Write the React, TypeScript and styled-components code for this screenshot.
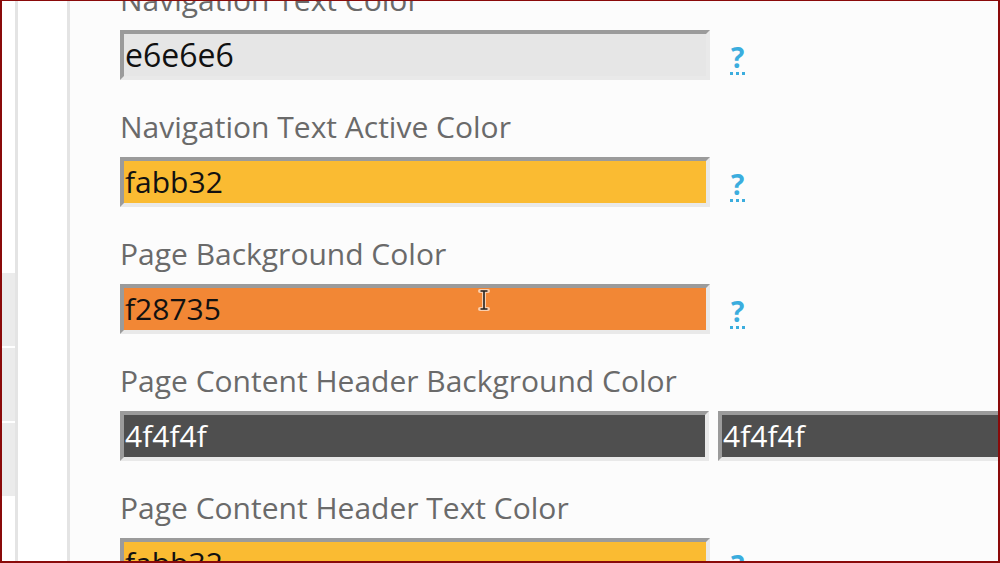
import React from "react";
import styled, { createGlobalStyle } from "styled-components";

const Global = createGlobalStyle`
  html, body { margin: 0; padding: 0; background: #fff; overflow: hidden; }
  * { box-sizing: border-box; }
`;

const Frame = styled.div`
  width: 1000px;
  height: 563px;
  border: 2px solid #8a0a0a;
  border-top-width: 1px;
  display: flex;
  overflow: hidden;
  background: #fff;
  font-family: "Open Sans", "Noto Sans", sans-serif;
`;

const Sidebar = styled.div`
  display: flex;
  flex: none;
  height: 100%;
`;

const Strip = styled.div`
  width: 13px;
  display: flex;
  flex-direction: column;
  gap: 2px;
  padding-top: 272px;
`;

const StripItem = styled.div`
  height: 73px;
  background: #ebebeb;
`;

const Rule = styled.div`
  width: 3px;
  background: #e4e4e4;
`;

const Gutter = styled.div`
  width: 49px;
  background: #fff;
`;

const Content = styled.div`
  flex: 1;
  background: #fcfcfc;
  padding-left: 50px;
  overflow: hidden;
`;

const Scroller = styled.div`
  margin-top: -22px;
  display: flex;
  flex-direction: column;
`;

const Field = styled.div`
  display: flex;
  flex-direction: column;
  margin-bottom: 26px;
`;

const Label = styled.div`
  font-size: 30px;
  line-height: 41px;
  color: #6a6a6a;
  margin-bottom: 10px;
  white-space: nowrap;
`;

const InputRow = styled.div`
  display: flex;
  align-items: center;
  gap: 9px;
  position: relative;
`;

const ColorInput = styled.div<{ $bg: string; $fg: string; $w: number; $big?: boolean }>`
  width: ${(p) => p.$w}px;
  flex: none;
  height: 50px;
  border-style: solid;
  border-width: 4px;
  border-color: #9b9b9b #e9e9e9 #e9e9e9 #9b9b9b;
  background: ${(p) => p.$bg};
  color: ${(p) => p.$fg};
  font-size: ${(p) => (p.$big ? 32 : 30)}px;
  line-height: 42px;
  padding-left: 1px;
  white-space: nowrap;
`;

const Help = styled.span`
  margin-left: 11px;
  color: #3badde;
  font-weight: 700;
  font-size: 28px;
  line-height: 30px;
  border-bottom: 3px dotted #3badde;
  padding: 0 1px;
  margin-top: 6px;
`;

const Cursor = styled.svg`
  position: absolute;
  left: 358px;
  top: 5px;
`;

type F = { label: string; value: string; bg: string; fg: string; double?: boolean; cursor?: boolean; big?: boolean };

const fields: F[] = [
  { label: "Navigation Text Color", value: "e6e6e6", bg: "#e6e6e6", fg: "#111", big: true },
  { label: "Navigation Text Active Color", value: "fabb32", bg: "#fabb32", fg: "#111" },
  { label: "Page Background Color", value: "f28735", bg: "#f28735", fg: "#111", cursor: true },
  { label: "Page Content Header Background Color", value: "4f4f4f", bg: "#4f4f4f", fg: "#fff", double: true },
  { label: "Page Content Header Text Color", value: "fabb32", bg: "#fabb32", fg: "#111" },
];

export default function App() {
  return (
    <>
      <Global />
      <Frame>
        <Sidebar>
          <Strip>
            <StripItem />
            <StripItem />
            <StripItem />
          </Strip>
          <Rule />
          <Gutter />
          <Rule />
        </Sidebar>
        <Content>
          <Scroller>
            {fields.map((f) => (
              <Field key={f.label}>
                <Label>{f.label}</Label>
                <InputRow>
                  <ColorInput $bg={f.bg} $fg={f.fg} $w={f.double ? 589 : 590} $big={f.big}>
                    {f.value}
                  </ColorInput>
                  {f.double ? (
                    <ColorInput $bg={f.bg} $fg={f.fg} $w={320}>
                      {f.value}
                    </ColorInput>
                  ) : (
                    <Help>?</Help>
                  )}
                  {f.cursor && (
                    <Cursor width="12" height="22" viewBox="0 0 12 22">
                      <path
                        d="M2 2h8M6 2v18M2 20h8"
                        stroke="#fff"
                        strokeWidth="4"
                        strokeLinecap="round"
                        fill="none"
                        opacity="0.6"
                      />
                      <path d="M2.5 2h7M6 2v18M2.5 20h7" stroke="#222" strokeWidth="1.6" fill="none" />
                    </Cursor>
                  )}
                </InputRow>
              </Field>
            ))}
          </Scroller>
        </Content>
      </Frame>
    </>
  );
}
